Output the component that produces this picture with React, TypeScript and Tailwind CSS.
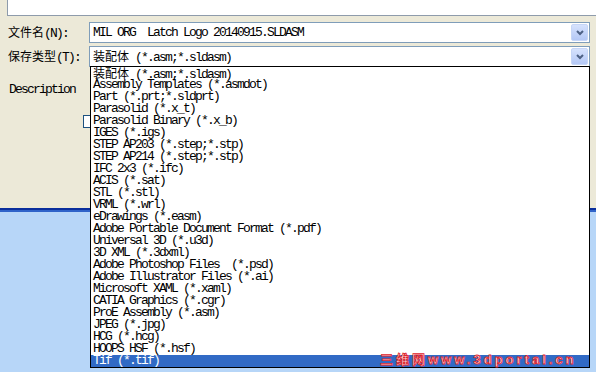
import React from "react";

const MONO = "font-['Liberation_Mono','Noto_Sans_CJK_SC',monospace] text-[13px] leading-[12px] tracking-[-1.8px]";

function Cjk({ children }: { children: React.ReactNode }) {
  return (
    <span className="font-['Noto_Sans_CJK_SC',sans-serif] tracking-normal text-[12px]">{children}</span>
  );
}

const fileTypes: React.ReactNode[] = [
  <><Cjk>装配体</Cjk> (*.asm;*.sldasm)</>,
  "Assembly Templates (*.asmdot)",
  "Part (*.prt;*.sldprt)",
  "Parasolid (*.x_t)",
  "Parasolid Binary (*.x_b)",
  "IGES (*.igs)",
  "STEP AP203 (*.step;*.stp)",
  "STEP AP214 (*.step;*.stp)",
  "IFC 2x3 (*.ifc)",
  "ACIS (*.sat)",
  "STL (*.stl)",
  "VRML (*.wrl)",
  "eDrawings (*.easm)",
  "Adobe Portable Document Format (*.pdf)",
  "Universal 3D (*.u3d)",
  "3D XML (*.3dxml)",
  "Adobe Photoshop Files  (*.psd)",
  "Adobe Illustrator Files (*.ai)",
  "Microsoft XAML (*.xaml)",
  "CATIA Graphics (*.cgr)",
  "ProE Assembly (*.asm)",
  "JPEG (*.jpg)",
  "HCG (*.hcg)",
  "HOOPS HSF (*.hsf)",
  "Tif (*.tif)",
];

function ComboButton() {
  return (
    <div className="w-[17px] h-[17px] mr-[1px] rounded-[2px] border border-[#c6d6f7] bg-gradient-to-b from-[#d6e2fd] to-[#b4c8f6] flex items-center justify-center">
      <svg width="8" height="6" viewBox="0 0 8 6">
        <path d="M1 1 L4 4 L7 1" stroke="#4d6185" strokeWidth="2" fill="none" />
      </svg>
    </div>
  );
}

function Combo({ value }: { value: React.ReactNode }) {
  return (
    <div className="w-[501px] h-[21px] border border-[#7f9db9] bg-white flex items-center">
      <div className={`flex-1 pl-[3px] whitespace-pre ${MONO} text-black`}>{value}</div>
      <ComboButton />
    </div>
  );
}

export default function App() {
  return (
    <div className="relative w-[596px] h-[372px] overflow-hidden bg-[#ece9d8] text-black">
      {/* top box */}
      <div className="ml-[7px] h-[16px] bg-white border-l border-b border-[#8e9bab]" />

      {/* file name */}
      <div className="flex items-center mt-[6px]">
        <div className={`w-[89px] pl-[8px] whitespace-pre ${MONO}`}>
          <Cjk>文件名</Cjk>(N):
        </div>
        <Combo value="MIL ORG  Latch Logo 20140915.SLDASM" />
      </div>

      {/* save type */}
      <div className="flex items-center mt-[3px]">
        <div className={`w-[89px] pl-[8px] whitespace-pre ${MONO}`}>
          <Cjk>保存类型</Cjk>(T):
        </div>
        <Combo value={<><Cjk>装配体</Cjk> (*.asm;*.sldasm)</>} />
      </div>

      {/* description area */}
      <div className="h-[141px] relative">
        <div className={`pl-[9px] pt-[17px] ${MONO}`}>Description</div>
        <div className="ml-[83px] mt-[19px] w-[13px] h-[13px] border border-[#1c5180] bg-white" />
      </div>

      {/* blue lower region */}
      <div className="h-[2px] bg-[#0a2e9c]" />
      <div className="h-[2px] bg-[#2f63c9]" />
      <div className="h-[160px] bg-[#b7d6f8]" />

      {/* open dropdown list */}
      <div className="absolute left-[90px] top-[66px] w-[500px] h-[302px] bg-white border border-black flex flex-col">
        {fileTypes.map((t, i) => {
          const selected = i === fileTypes.length - 1;
          return (
            <div
              key={i}
              className={`h-[12px] pl-[2px] whitespace-pre ${MONO} ${
                selected ? "bg-[#316ac5] text-white" : "text-black"
              }`}
            >
              {t}
            </div>
          );
        })}
      </div>

      {/* watermark */}
      <div className="absolute left-[380px] top-[353px] text-[13px] leading-[14px] font-bold tracking-[3px] font-['Liberation_Sans','Noto_Sans_CJK_SC',sans-serif] text-[#ffe8ea] [-webkit-text-stroke:0.8px_#e0242c] whitespace-nowrap">
        三维网www.3dportal.cn
      </div>
    </div>
  );
}
